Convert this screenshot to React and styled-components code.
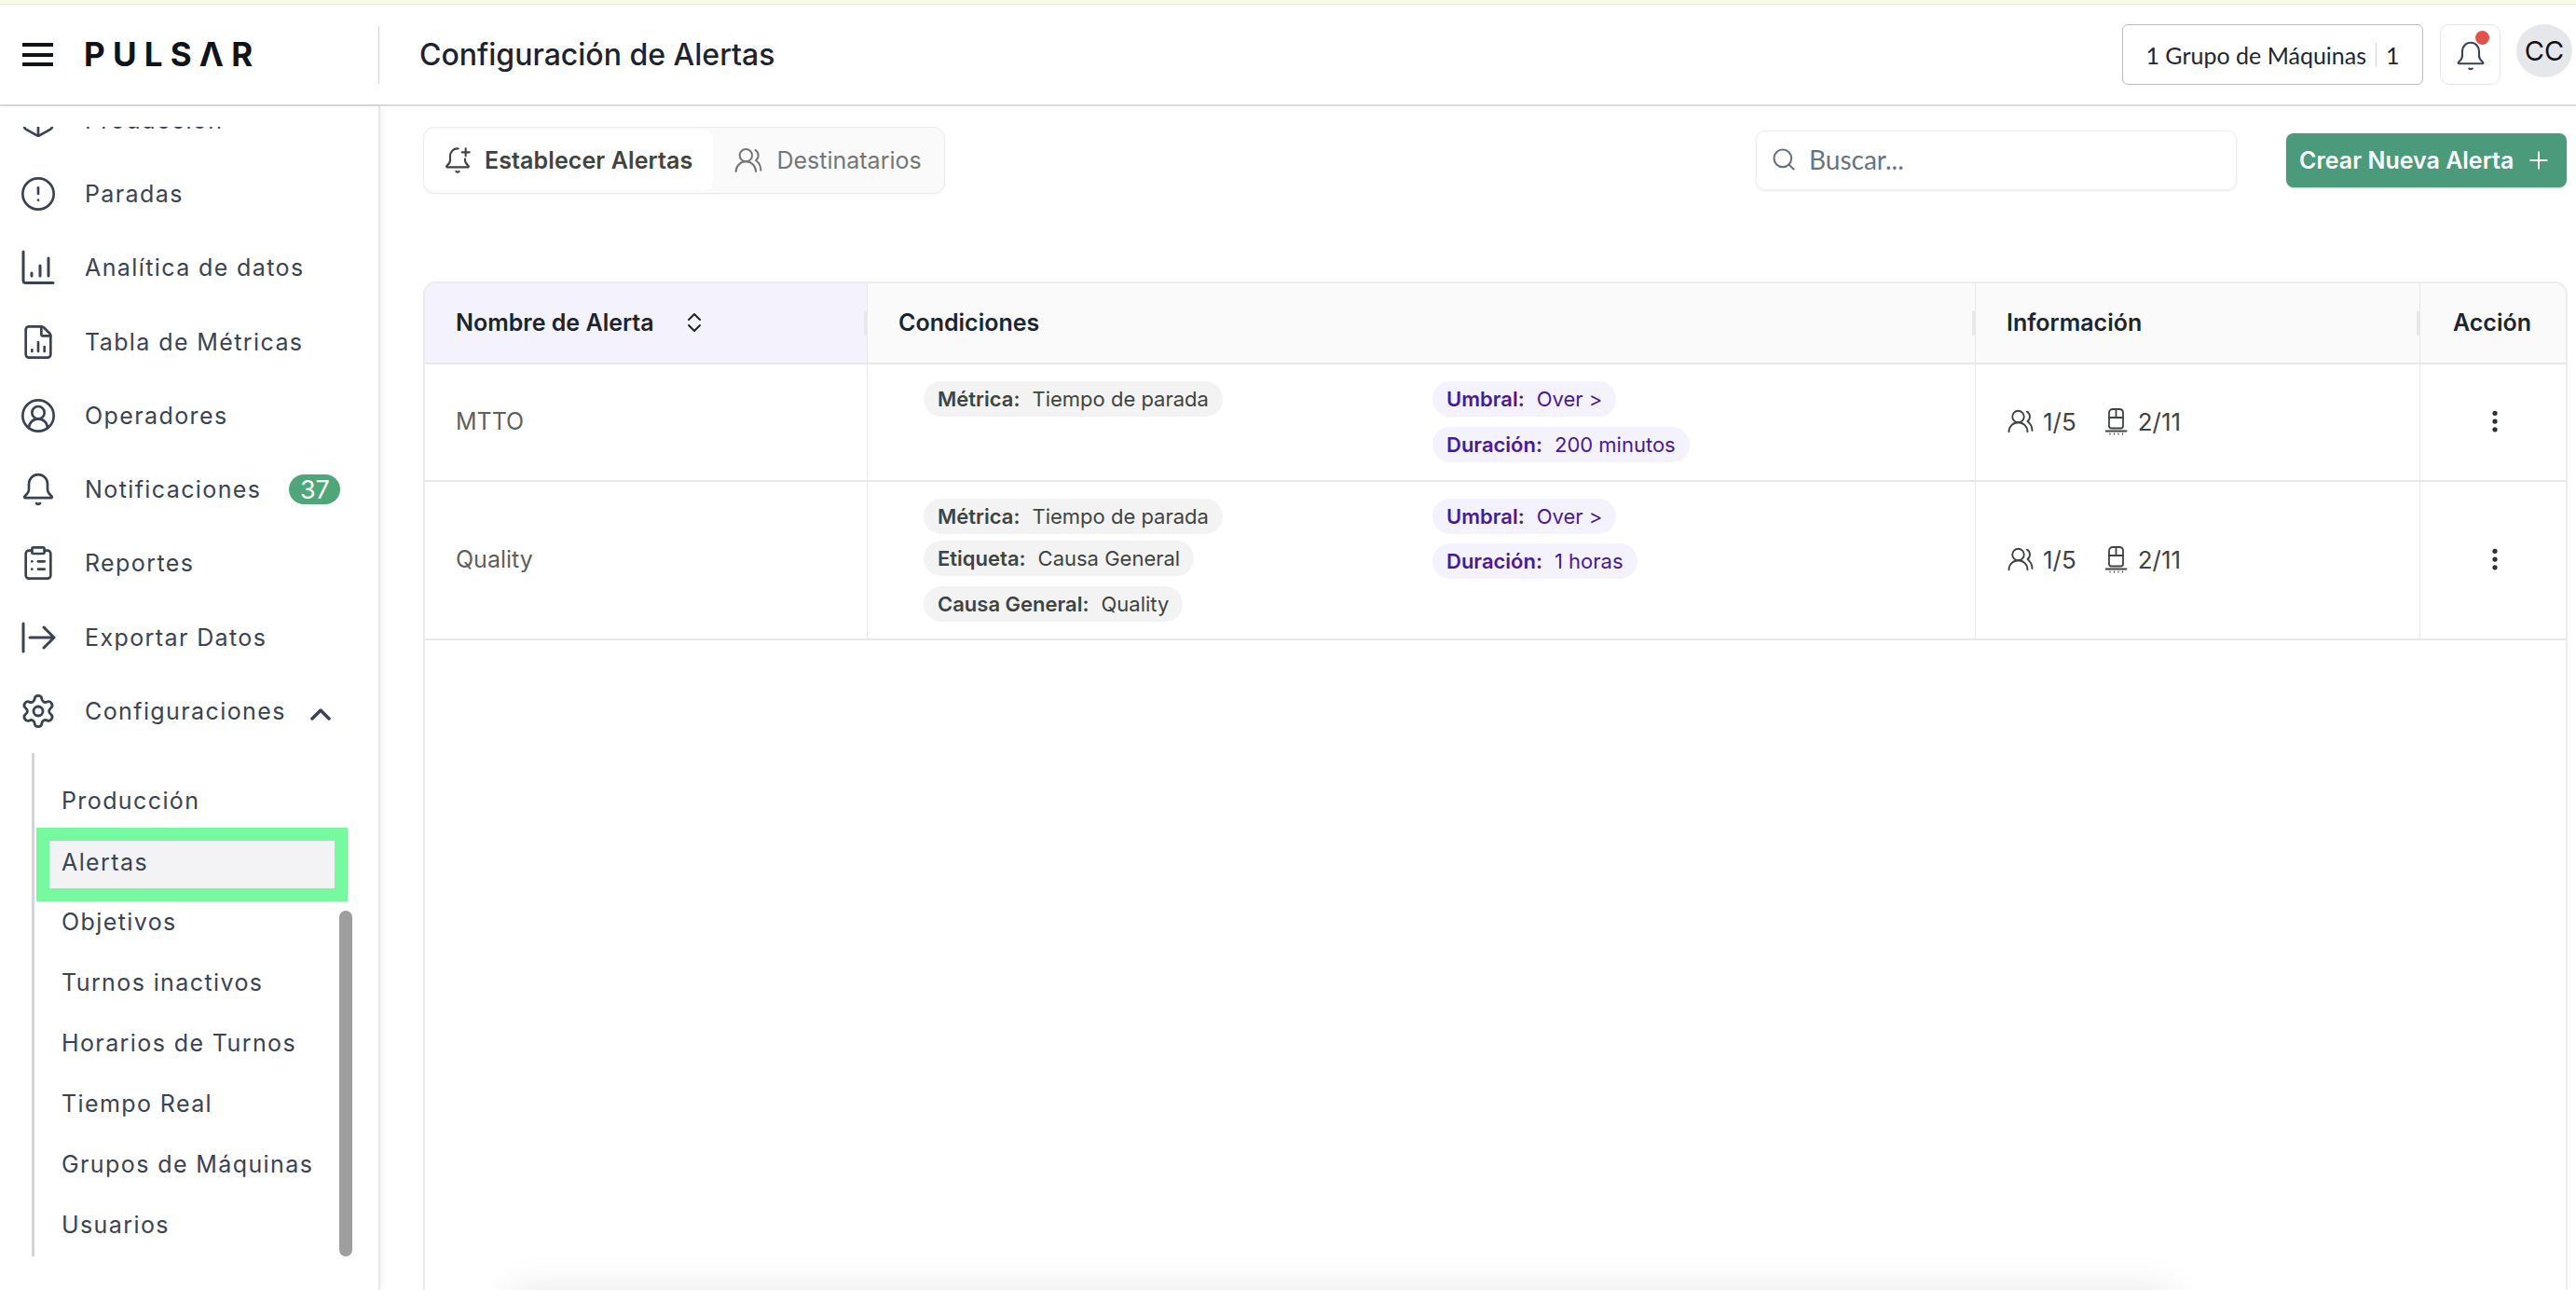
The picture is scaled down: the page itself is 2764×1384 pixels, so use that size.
import React from "react";
import styled, { createGlobalStyle } from "styled-components";
import {
  Box,
  CircleAlert,
  CircleUserRound,
  ClipboardList,
  EllipsisVertical,
  FileChartColumn,
  Plus,
  Search,
  Settings,
  UsersRound,
} from "lucide-react";

const GlobalStyle = createGlobalStyle`
  html, body {
    margin: 0;
    height: 100%;
    overflow: hidden;
    background: #fff;
    font-family: Inter, "Liberation Sans", sans-serif;
  }
  * { box-sizing: border-box; }
`;

const Page = styled.div`
  width: 2764px;
  height: 1384px;
  display: flex;
  flex-direction: column;
  position: relative;
  overflow: hidden;
`;

const TopStrip = styled.div`
  height: 5px;
  flex: none;
  background: #fafae9;
  border-bottom: 1px solid #e9e9d8;
`;

const Header = styled.header`
  height: 109px;
  flex: none;
  display: flex;
  align-items: center;
  border-bottom: 2px solid #d9d9dc;
  padding-right: 4px;
`;

const Brand = styled.div`
  width: 407px;
  height: 62px;
  flex: none;
  display: flex;
  align-items: center;
  padding-left: 24px;
  gap: 33px;
  border-right: 1px solid #d4d4d6;
`;

const Burger = styled.div`
  width: 33px;
  height: 25px;
  border-top: 4px solid #10131a;
  border-bottom: 4px solid #10131a;
  position: relative;
  &::after {
    content: "";
    position: absolute;
    left: 0;
    right: 0;
    top: 6.5px;
    height: 4px;
    background: #10131a;
  }
`;

const Logo = styled.div`
  font-size: 35px;
  font-weight: 700;
  letter-spacing: 8.2px;
  color: #10131a;
  line-height: 1;
`;

const Title = styled.h1`
  margin: 0 0 0 43px;
  font-size: 32px;
  font-weight: 500;
  color: #1c2430;
`;

const HeaderRight = styled.div`
  margin-left: auto;
  display: flex;
  align-items: center;
`;

const GroupButton = styled.div`
  width: 323px;
  height: 65px;
  display: flex;
  align-items: center;
  justify-content: center;
  border: 1px solid #bdbdc0;
  border-radius: 6px;
  font-family: Lato, sans-serif;
  font-size: 25px;
  color: #23272e;
`;

const GroupDivider = styled.span`
  width: 1px;
  height: 26px;
  margin: 0 10px;
  background: #d5d5d8;
`;

const BellButton = styled.div`
  width: 65px;
  height: 65px;
  margin-left: 18px;
  padding-top: 3px;
  display: flex;
  align-items: center;
  justify-content: center;
  border: 1px solid #e6e6e8;
  border-radius: 10px;
  position: relative;
  color: #3a4354;
`;

const RedDot = styled.span`
  position: absolute;
  top: 6px;
  right: 11px;
  width: 15px;
  height: 15px;
  border-radius: 50%;
  background: #e0524a;
`;

const Avatar = styled.div`
  width: 60px;
  height: 57px;
  margin: -8px 0 0 17px;
  padding-bottom: 0;
  border-radius: 50%;
  background: #e5e7eb;
  display: flex;
  align-items: center;
  justify-content: center;
  font-size: 29px;
  color: #111;
`;

const Body = styled.div`
  flex: 1;
  display: flex;
  min-height: 0;
`;

const Sidebar = styled.aside`
  width: 408px;
  flex: none;
  padding-top: 22px;
  border-right: 2px solid #e8e8ea;
  box-shadow: 3px 0 6px rgba(0, 0, 0, 0.04);
`;

const NavClip = styled.div`
  overflow: hidden;
  height: 100%;
`;

const NavList = styled.nav`
  margin-top: -47px;
`;

const NavRow = styled.div`
  height: 79.3px;
  display: flex;
  align-items: center;
  padding-left: 21px;
  color: #3a4354;
`;

const NavIcon = styled.span`
  width: 40px;
  height: 40px;
  flex: none;
  display: flex;
  align-items: center;
  justify-content: center;
`;

const NavText = styled.span`
  margin-left: 30px;
  font-size: 25px;
  letter-spacing: 1.4px;
  color: #3a4354;
`;

const CountBadge = styled.span`
  margin-left: 30px;
  width: 55px;
  height: 32px;
  border-radius: 16px;
  background: #4fa679;
  color: #fff;
  font-size: 27px;
  display: flex;
  align-items: center;
  justify-content: center;
`;

const Caret = styled.span`
  margin: 6px 0 0 26px;
  display: flex;
  color: #3a4354;
`;

const SubList = styled.div`
  position: relative;
  width: 344px;
  margin: 5px 0 0 34px;
  padding: 19px 0 0;
  height: 540px;
  border-left: 3px solid #d4d4d6;
`;

const SubItem = styled.div`
  display: flex;
  align-items: center;
  font-size: 25px;
  letter-spacing: 1.4px;
  color: #3a4354;
  height: ${(p) => (p.$active ? "51px" : "65px")};
  padding-left: ${(p) => (p.$active ? "13px" : "29px")};
  padding-bottom: ${(p) => (p.$active ? "5px" : "0")};
  margin: ${(p) => (p.$active ? "10px 0 4px 16px" : "0")};
  width: ${(p) => (p.$active ? "306px" : "auto")};
  background: ${(p) => (p.$active ? "#f3f3f5" : "transparent")};
  outline: ${(p) => (p.$active ? "14px solid #77f99f" : "none")};
`;

const ScrollThumb = styled.div`
  position: absolute;
  right: 0;
  top: 169px;
  bottom: 0;
  width: 14px;
  border-radius: 7px;
  background: #9e9e9e;
`;

const Main = styled.main`
  flex: 1;
  min-width: 0;
  padding: 22px 9px 0 46px;
  display: flex;
  flex-direction: column;
`;

const Toolbar = styled.div`
  height: 72px;
  flex: none;
  margin-right: 1px;
  display: flex;
  align-items: center;
`;

const Tabs = styled.div`
  width: 560px;
  height: 72px;
  display: flex;
  border: 1px solid #ececee;
  border-radius: 12px;
  background: #fafafa;
  padding: 2px 0 3px;
  box-shadow: 0 1px 1px rgba(0, 0, 0, 0.03);
`;

const Tab = styled.div`
  display: flex;
  align-items: center;
  height: 100%;
  font-size: 25px;
  letter-spacing: ${(p) => (p.$active ? "0.1px" : "0")};
  width: ${(p) => (p.$active ? "311px" : "248px")};
  padding-left: ${(p) => (p.$active ? "20px" : "22px")};
  gap: ${(p) => (p.$active ? "13px" : "14px")};
  font-weight: ${(p) => (p.$active ? 600 : 400)};
  color: ${(p) => (p.$active ? "#3f4341" : "#767676")};
  background: ${(p) => (p.$active ? "#fff" : "transparent")};
  border-radius: 10px;
`;

const SearchBox = styled.div`
  width: 516px;
  height: 64px;
  margin-left: auto;
  display: flex;
  align-items: center;
  gap: 13px;
  padding-left: 15px;
  padding-bottom: 2px;
  border: 1px solid #eeeef0;
  border-radius: 10px;
  box-shadow: 0 1px 3px rgba(0, 0, 0, 0.08);
  color: #6b7280;
  font-family: Lato, sans-serif;
  font-size: 28px;
`;

const CreateButton = styled.div`
  width: 301px;
  height: 58px;
  margin-left: 53px;
  display: flex;
  align-items: center;
  justify-content: space-between;
  padding: 0 15px 0 14px;
  border-radius: 8px;
  background: #4b9a7b;
  color: #fff;
  font-size: 25px;
  font-weight: 600;
  box-shadow: 0 1px 2px rgba(0, 0, 0, 0.2);
`;

const Table = styled.section`
  flex: 1;
  margin-top: 94px;
  border: 2px solid #ececee;
  border-bottom: 0;
  border-radius: 14px 14px 0 0;
  overflow: hidden;
`;

const columns = "475px 1189px 477px 1fr";

const HeadRow = styled.div`
  display: grid;
  grid-template-columns: ${columns};
  height: 87px;
  background: #fafafa;
  border-bottom: 2px solid #e8e8ea;
`;

const HeadCell = styled.div`
  position: relative;
  display: flex;
  align-items: center;
  padding-left: ${(p) => p.$pad || "33px"};
  padding-bottom: 2px;
  font-size: 25px;
  font-weight: 600;
  color: #1c2430;
  background: ${(p) => (p.$sorted ? "#f3f2fd" : "transparent")};
  border-right: ${(p) => (p.$last ? "0" : "1px solid #e8e8ea")};
  &::after {
    content: "";
    display: ${(p) => (p.$last ? "none" : "block")};
    position: absolute;
    right: 0;
    top: 30px;
    width: 3px;
    height: 26px;
    background: #e8e8ea;
  }
`;

const SortIcon = styled.svg`
  margin-left: 34px;
  color: #1c2430;
`;

const Row = styled.div`
  display: grid;
  grid-template-columns: ${columns};
  height: ${(p) => p.$height}px;
  border-bottom: 2px solid #e8e8ea;
`;

const Cell = styled.div`
  border-right: ${(p) => (p.$last ? "0" : "1px solid #e8e8ea")};
  display: flex;
  align-items: center;
  padding-left: 33px;
  padding-bottom: 2px;
  font-size: 25px;
  color: #5f5f5f;
`;

const ConditionsCell = styled.div`
  border-right: 1px solid #e8e8ea;
  display: grid;
  grid-template-columns: 546px 1fr;
  padding: 18px 0 0 60px;
`;

const ChipStack = styled.div`
  display: flex;
  flex-direction: column;
  align-items: flex-start;
`;

const Chip = styled.div`
  height: 38px;
  flex: none;
  display: flex;
  align-items: center;
  gap: 13px;
  padding: 0 15px;
  margin-top: ${(p) => p.$top || 0}px;
  border-radius: 19px;
  font-size: 22px;
  white-space: nowrap;
  background: ${(p) => (p.$accent ? "#f4f2fd" : "#f3f3f3")};
  color: ${(p) => (p.$accent ? "#4a1a94" : "#3f4341")};
  b {
    font-weight: 600;
  }
`;

const InfoCell = styled(Cell)`
  color: #3f4341;
  font-size: 26px;
  gap: 9px;
`;

const InfoCount = styled.span`
  margin-right: ${(p) => p.$gap || 0}px;
`;

const ActionCell = styled(Cell)`
  padding: 0 0 2px 65px;
  color: #2b2f36;
`;

const BottomFade = styled.div`
  position: absolute;
  left: 550px;
  width: 1780px;
  bottom: -40px;
  height: 40px;
  box-shadow: 0 0 40px rgba(0, 0, 0, 0.1);
`;

const BellGlyph = ({ size = 24, plus = false, sw = 1.6 }) => (
  <svg width={size} height={size} viewBox="0 0 24 24" fill="none" stroke="currentColor" strokeWidth={sw} strokeLinecap="round" strokeLinejoin="round">
    <path d={plus
      ? "M12.5 2.6C8.8 2.2 6 5 6 8.7V12c0 1.8-1 3-2.6 4.3-.6.5-.3 1.2.4 1.2h16.4c.7 0 1-.7.4-1.2C19 15 18 13.8 18 12v-1"
      : "M12 2.500c-3.500 0-6 2.800-6 6.200V12c0 1.800-1 3-2.600 4.300-.6.5-.3 1.200.4 1.200h16.400c.7 0 1-.7.4-1.200C19 15 18 13.800 18 12V8.700c0-3.400-2.500-6.200-6-6.200z"} />
    <path d="M10.800 21c.7.6 1.700.6 2.400 0" />
    {plus && <path d="M18.500 2.500v6M15.500 5.500h6" />}
  </svg>
);

const ChartGlyph = () => (
  <svg width="38" height="38" viewBox="0 0 38 38" fill="none" stroke="currentColor" strokeWidth="3" strokeLinecap="round" strokeLinejoin="round">
    <path d="M3 2v31c0 1.500.8 2.500 2.500 2.500H35" />
    <path d="M12 25v3M21 17v11M30 9v19" />
  </svg>
);

const ExportGlyph = () => (
  <svg width="38" height="38" viewBox="0 0 38 38" fill="none" stroke="currentColor" strokeWidth="3" strokeLinecap="round" strokeLinejoin="round">
    <path d="M3 4v30M10 19h26M25 8l11 11-11 11" />
  </svg>
);

const TrainGlyph = () => (
  <svg width="26" height="30" viewBox="0 0 26 30" fill="none" stroke="currentColor" strokeWidth="1.800" strokeLinecap="round" strokeLinejoin="round">
    <path d="M4 20V6c0-2.500 1.500-4 4-4h7c2.500 0 4 1.500 4 4v14c0 1.500-1 2.500-2.500 2.500h-10C5 22.500 4 21.500 4 20z" />
    <path d="M4 11h15M11.500 2v9M0.500 25.500h22" />
    <path d="M5 28v1M9.500 28v1M14 28v1M18.500 28v1" strokeWidth="1.200" />
  </svg>
);

const mainNav = [
  { label: "Producción", icon: <Box size={46} strokeWidth={1.6} /> },
  { label: "Paradas", icon: <CircleAlert size={46} strokeWidth={1.6} /> },
  { label: "Analítica de datos", icon: <ChartGlyph /> },
  { label: "Tabla de Métricas", icon: <FileChartColumn size={46} strokeWidth={1.6} /> },
  { label: "Operadores", icon: <CircleUserRound size={46} strokeWidth={1.6} /> },
  { label: "Notificaciones", icon: <BellGlyph size={46} />, badge: 37 },
  { label: "Reportes", icon: <ClipboardList size={46} strokeWidth={1.6} /> },
  { label: "Exportar Datos", icon: <ExportGlyph /> },
  { label: "Configuraciones", icon: <Settings size={42} strokeWidth={1.7} />, open: true },
];

const subNav = ["Producción", "Alertas", "Objetivos", "Turnos inactivos", "Horarios de Turnos", "Tiempo Real", "Grupos de Máquinas", "Usuarios"];

const alerts = [
  {
    name: "MTTO",
    height: 126,
    left: [{ k: "Métrica:", v: "Tiempo de parada" }],
    right: [{ k: "Umbral:", v: "Over >" }, { k: "Duración:", v: "200 minutos", top: 11 }],
  },
  {
    name: "Quality",
    height: 170,
    left: [
      { k: "Métrica:", v: "Tiempo de parada" },
      { k: "Etiqueta:", v: "Causa General", top: 7 },
      { k: "Causa General:", v: "Quality", top: 11 },
    ],
    right: [{ k: "Umbral:", v: "Over >" }, { k: "Duración:", v: "1 horas", top: 10 }],
  },
];

const App = () => {
  return (
    <Page>
      <GlobalStyle />
      <TopStrip />
      <Header>
        <Brand>
          <Burger />
          <Logo>PULSΛR</Logo>
        </Brand>
        <Title>Configuración de Alertas</Title>
        <HeaderRight>
          <GroupButton>
            1 Grupo de Máquinas
            <GroupDivider />1
          </GroupButton>
          <BellButton>
            <BellGlyph size={36} sw={1.4} />
            <RedDot />
          </BellButton>
          <Avatar>CC</Avatar>
        </HeaderRight>
      </Header>
      <Body>
        <Sidebar>
          <NavClip>
            <NavList>
              {mainNav.map((item) => (
                <NavRow key={item.label}>
                  <NavIcon>{item.icon}</NavIcon>
                  <NavText>{item.label}</NavText>
                  {item.badge && <CountBadge>{item.badge}</CountBadge>}
                  {item.open && (
                    <Caret>
                      <svg width="22" height="14" viewBox="0 0 22 14" fill="none" stroke="currentColor" strokeWidth="3.500" strokeLinecap="round" strokeLinejoin="round">
                        <path d="M2 12l9-9 9 9" />
                      </svg>
                    </Caret>
                  )}
                </NavRow>
              ))}
              <SubList>
                {subNav.map((label) => (
                  <SubItem key={label} $active={label === "Alertas"}>
                    {label}
                  </SubItem>
                ))}
                <ScrollThumb />
              </SubList>
            </NavList>
          </NavClip>
        </Sidebar>
        <Main>
          <Toolbar>
            <Tabs>
              <Tab $active>
                <BellGlyph size={32} plus />
                Establecer Alertas
              </Tab>
              <Tab>
                <UsersRound size={32} strokeWidth={1.5} />
                Destinatarios
              </Tab>
            </Tabs>
            <SearchBox>
              <Search size={28} strokeWidth={1.8} />
              Buscar...
            </SearchBox>
            <CreateButton>
              Crear Nueva Alerta
              <Plus size={30} strokeWidth={1.6} />
            </CreateButton>
          </Toolbar>
          <Table>
            <HeadRow>
              <HeadCell $sorted>
                Nombre de Alerta
                <SortIcon width="18" height="24" viewBox="0 0 18 24" fill="none" stroke="currentColor" strokeWidth="2" strokeLinecap="round" strokeLinejoin="round">
                  <path d="M3 9l6-6 6 6M3 15l6 6 6-6" />
                </SortIcon>
              </HeadCell>
              <HeadCell>Condiciones</HeadCell>
              <HeadCell>Información</HeadCell>
              <HeadCell $last $pad="35px">Acción</HeadCell>
            </HeadRow>
            {alerts.map((a) => (
              <Row key={a.name} $height={a.height}>
                <Cell>{a.name}</Cell>
                <ConditionsCell>
                  <ChipStack>
                    {a.left.map((c) => (
                      <Chip key={c.k} $top={c.top}>
                        <b>{c.k}</b>
                        {c.v}
                      </Chip>
                    ))}
                  </ChipStack>
                  <ChipStack>
                    {a.right.map((c) => (
                      <Chip key={c.k} $accent $top={c.top}>
                        <b>{c.k}</b>
                        {c.v}
                      </Chip>
                    ))}
                  </ChipStack>
                </ConditionsCell>
                <InfoCell>
                  <UsersRound size={30} strokeWidth={1.5} />
                  <InfoCount $gap={22}>1/5</InfoCount>
                  <TrainGlyph />
                  <InfoCount>2/11</InfoCount>
                </InfoCell>
                <ActionCell $last>
                  <EllipsisVertical size={30} strokeWidth={2.2} />
                </ActionCell>
              </Row>
            ))}
          </Table>
        </Main>
      </Body>
      <BottomFade />
    </Page>
  );
};

export default App;
